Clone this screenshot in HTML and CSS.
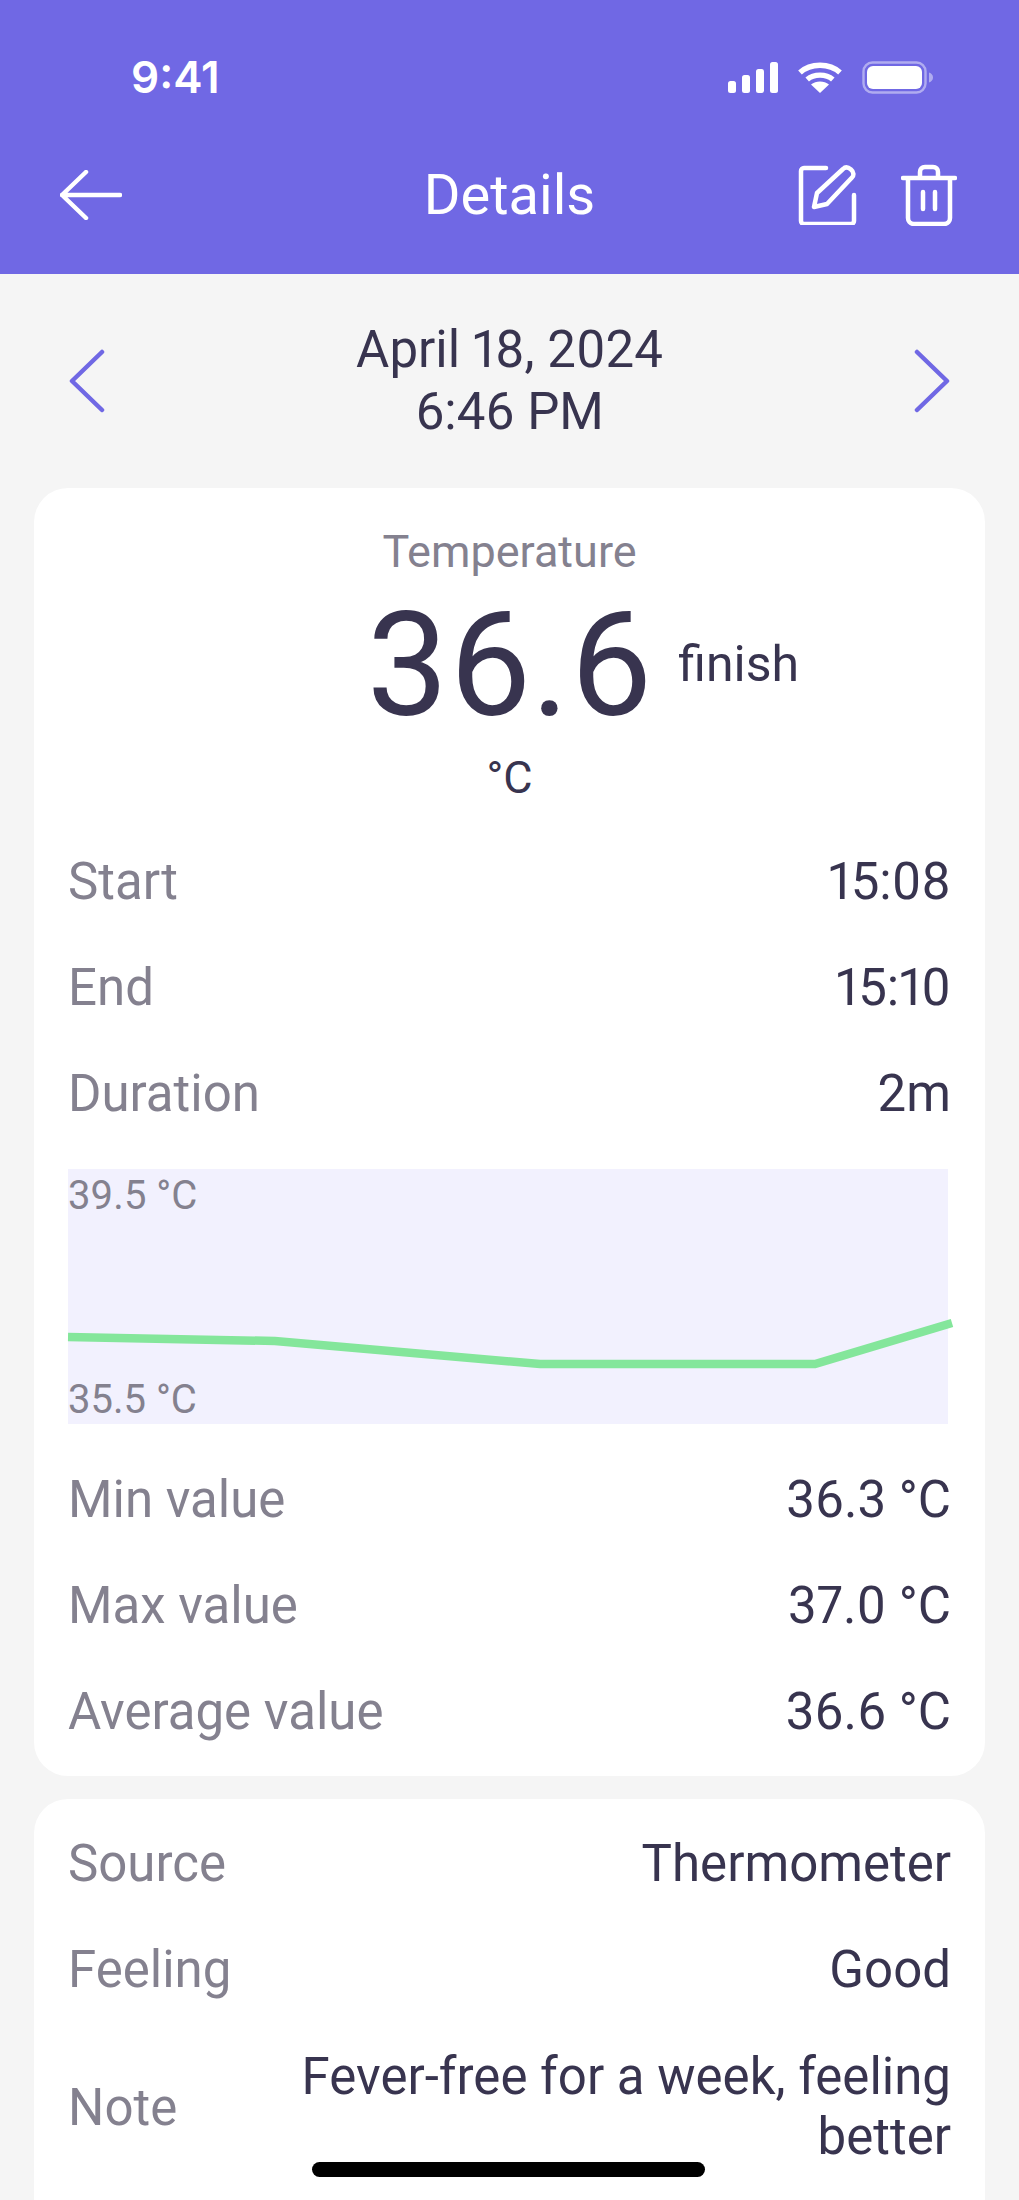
FILE: index.html
```html
<!DOCTYPE html>
<html lang="en">
<head>
<meta charset="utf-8">
<title>Details</title>
<link rel="stylesheet" href="styles.css">
</head>
<body>
<div class="screen">
  <header class="header">
    <div class="status">
      <span class="clock">9:41</span>
      <div class="status-icons">
        <svg class="i-signal" width="50" height="31" viewBox="0 0 50 31"><g fill="#fff"><rect x="0" y="19" width="8" height="12" rx="2.5"/><rect x="14" y="13" width="8" height="18" rx="2.5"/><rect x="28" y="7" width="8" height="24" rx="2.5"/><rect x="42" y="0" width="8" height="31" rx="2.5"/></g></svg>
        <svg class="i-wifi" width="46" height="32" viewBox="0 0 46 32"><path d="M3 11.5C13.5 1.8 32.5 1.8 43 11.5M10.2 18.5C17 12.6 29 12.6 35.8 18.5" fill="none" stroke="#fff" stroke-width="5.4"/><path d="M23 32l-9-8.5c5-4 13-4 18 0z" fill="#fff"/></svg>
        <svg class="i-battery" width="71" height="33" viewBox="0 0 71 33"><rect x="1.5" y="1.5" width="62" height="30" rx="9" fill="none" stroke="#fff" stroke-opacity=".45" stroke-width="2.4"/><rect x="5" y="5" width="55" height="23" rx="6" fill="#fff"/><path d="M67 11.5c2.5.8 4 2.7 4 5s-1.500 4.200-4 5z" fill="#fff" fill-opacity=".45"/></svg>
      </div>
    </div>
    <nav class="nav">
      <svg class="i-back" width="62" height="50" viewBox="0 0 62 50"><path d="M60 25H2M26 2L2 25l24 23" fill="none" stroke="#fff" stroke-width="4.5" stroke-linecap="round" stroke-linejoin="round"/></svg>
      <h1 class="title">Details</h1>
      <div class="actions">
        <svg width="60" height="60" viewBox="0 0 60 60"><path d="M28 3H6a3 3 0 0 0-3 3v50a3 3 0 0 0 3 3h47a3 3 0 0 0 3-3V30" fill="none" stroke="#fff" stroke-width="4.5" stroke-linecap="round"/><path d="M16 42l3-14L45 4c2-2 5-2 8 .5s3 6 1 8L29 39z" fill="none" stroke="#fff" stroke-width="4.5" stroke-linejoin="round"/></svg>
        <svg width="56" height="62" viewBox="0 0 56 62"><path d="M2 14h52M19 13V8c0-3 2-5 5-5h8c3 0 5 2 5 5v5M7 15v39c0 3 2 6 6 6h30c4 0 6-3 6-6V15M22 28v17M34 28v17" fill="none" stroke="#fff" stroke-width="4.5" stroke-linecap="round"/></svg>
      </div>
    </nav>
  </header>

  <main class="content">
    <section class="date-bar">
      <svg width="36" height="64" viewBox="0 0 36 64"><path d="M33 3L3 32l30 29" fill="none" stroke="#7068e4" stroke-width="4.5" stroke-linecap="round" stroke-linejoin="round"/></svg>
      <div class="date-text">April 18, 2024<br>6:46 PM</div>
      <svg width="36" height="64" viewBox="0 0 36 64"><path d="M3 3l30 29L3 61" fill="none" stroke="#7068e4" stroke-width="4.5" stroke-linecap="round" stroke-linejoin="round"/></svg>
    </section>

    <section class="card card-main">
      <div class="reading">
        <div class="reading-label">Temperature</div>
        <div class="reading-row">
          <span class="reading-value">36.6</span>
          <span class="reading-state">finish</span>
        </div>
        <div class="reading-unit">°C</div>
      </div>
      <div class="row"><span class="key">Start</span><span class="val">15:08</span></div>
      <div class="row"><span class="key">End</span><span class="val">15:10</span></div>
      <div class="row"><span class="key">Duration</span><span class="val">2m</span></div>
      <div class="chart">
        <span class="chart-label">39.5 °C</span>
        <span class="chart-label">35.5 °C</span>
        <svg class="chart-line" width="882" height="255" viewBox="0 0 882 255"><polyline points="0,168 207,172 472,195 747,195 884,154" fill="none" stroke="#84e69b" stroke-width="8.5"/></svg>
      </div>
      <div class="row"><span class="key">Min value</span><span class="val">36.3 °C</span></div>
      <div class="row"><span class="key">Max value</span><span class="val">37.0 °C</span></div>
      <div class="row"><span class="key">Average value</span><span class="val">36.6 °C</span></div>
    </section>

    <section class="card card-extra">
      <div class="row"><span class="key">Source</span><span class="val">Thermometer</span></div>
      <div class="row"><span class="key">Feeling</span><span class="val">Good</span></div>
      <div class="row row-note"><span class="key">Note</span><span class="val val-note">Fever-free for a week, feeling better</span></div>
    </section>
  </main>

  <div class="home-indicator"></div>
</div>
</body>
</html>
```

FILE: styles.css
```css
* { box-sizing: border-box; margin: 0; padding: 0; }
html, body { height: 2200px; overflow: hidden; background: #f5f5f5; }
body { font-family: Roboto, "Liberation Sans", sans-serif; color: #38344f; font-variant-numeric: proportional-nums; }
.screen { position: relative; width: 1019px; height: 2200px; overflow: hidden; }

.header { height: 274px; background: #7068e4; color: #fff; padding-top: 58px; }
.status { display: flex; justify-content: space-between; align-items: center; height: 38px; padding: 0 90px 0 131px; }
.clock { font-family: Inter, Roboto, sans-serif; font-size: 44px; font-weight: 600; line-height: 38px; }
.status-icons { display: flex; align-items: center; gap: 19px; }
.i-battery { margin-right: -4px; }
.nav { display: flex; align-items: center; justify-content: space-between; height: 66px; margin-top: 66px; padding: 0 62px 0 60px; position: relative; }
.title { position: absolute; left: 0; right: 0; text-align: center; font-size: 56px; font-weight: 400; line-height: 66px; }
.actions { display: flex; align-items: center; gap: 43px; }

.content { padding: 0 34px; }
.date-bar { display: flex; align-items: center; justify-content: space-between; height: 214px; padding: 0 35px 0 35px; }
.date-text { font-size: 51px; line-height: 62px; text-align: center; }

.card { background: #fff; border-radius: 34px; padding: 0 34px; }
.card-main { height: 1288px; padding-top: 41px; }
.card-extra { margin-top: 23px; height: 440px; padding-top: 11px; }

.reading { text-align: center; height: 299px; }
.reading-label { font-size: 45px; line-height: 46px; color: #84818f; }
.reading-row { display: grid; grid-template-columns: 1fr auto 1fr; align-items: center; column-gap: 26px; height: 140px; margin-top: 20px; }
.reading-value { grid-column: 2; font-size: 145px; line-height: 140px; }
.reading-state { grid-column: 3; text-align: left; font-size: 50px; line-height: 50px; margin-top: -2px; }
.reading-unit { font-size: 45px; line-height: 50px; margin-top: 18px; }

.row { display: flex; justify-content: space-between; align-items: center; height: 106px; font-size: 51px; }
.key { color: #84818f; }
.val { color: #38344f; text-align: right; }
.row-note { height: auto; padding-top: 25px; }
.val-note { width: 700px; line-height: 60px; }

.chart { position: relative; height: 255px; margin: 23px 3px 22px 0; background: #f2f1fe; display: flex; flex-direction: column; justify-content: space-between; padding: 4px 0 1px 0; }
.chart-label { font-size: 40px; line-height: 46px; color: #84818f; }
.chart-line { position: absolute; left: 0; top: 0; overflow: visible; }

.home-indicator { position: absolute; left: 312px; top: 2162px; width: 393px; height: 15px; border-radius: 8px; background: #000; }
```
